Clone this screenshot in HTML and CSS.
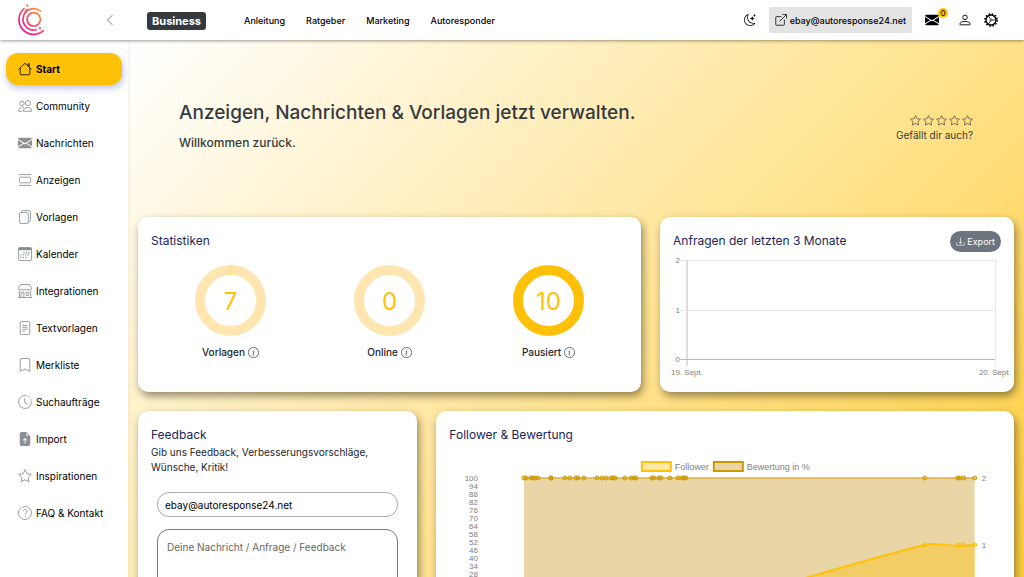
FILE: index.html
```html
<!DOCTYPE html>
<html lang="de">
<head>
<meta charset="utf-8">
<meta name="viewport" content="width=device-width, initial-scale=1">
<title>Autoresponder – Start</title>
<link rel="stylesheet" href="styles.css">
</head>
<body>
<header class="topbar">
  <div class="brand">
    <a class="logo" href="#" aria-label="Startseite">
      <svg width="28" height="32" viewBox="0 0 28 32" fill="none" stroke="url(#lg)" stroke-width="1.700" stroke-linecap="round">
        <defs><linearGradient id="lg" gradientUnits="userSpaceOnUse" x1="4" y1="26" x2="23" y2="7"><stop offset="0" stop-color="#f0149a"/><stop offset=".5" stop-color="#fa4a68"/><stop offset="1" stop-color="#fb9a34"/></linearGradient></defs>
        <circle cx="15.700" cy="15.300" r="6.700"/>
        <path d="M22.700 7.200A10.700 10.700 0 1 0 18.400 25.700"/>
        <path d="M6 4.600A14.500 14.500 0 0 0 25.400 26.700"/>
        <path d="M9.200 5.500L7.200 7.500"/>
        <circle cx="9.300" cy="1.600" r=".4"/><circle cx="21.900" cy="24.300" r=".4"/>
      </svg>
    </a>
    <button class="icon-btn collapse" aria-label="Menü einklappen"><svg width="8" height="12" viewBox="0 0 8 12" fill="none" stroke="#777" stroke-width="1"><path d="M6.500 1L1.500 6l5 5"/></svg></button>
  </div>
  <span class="plan">Business</span>
  <nav class="topnav" aria-label="Hauptnavigation">
    <a href="#">Anleitung</a><a href="#">Ratgeber</a><a href="#">Marketing</a><a href="#">Autoresponder</a>
  </nav>
  <div class="tools">
    <button class="icon-btn" aria-label="Dunkelmodus"><svg width="12" height="12" viewBox="0 0 16 16" fill="#111"><path d="M6 .278a.77.77 0 0 1 .08.858 7.200 7.200 0 0 0-.878 3.460c0 4.021 3.278 7.277 7.318 7.277q.792-.001 1.533-.16a.79.79 0 0 1 .81.316.73.73 0 0 1-.031.893A8.350 8.350 0 0 1 8.344 16C3.734 16 0 12.286 0 7.710 0 4.266 2.114 1.312 5.124.060A.75.75 0 0 1 6 .278M4.858 1.311A7.270 7.270 0 0 0 1.025 7.710c0 4.020 3.279 7.276 7.319 7.276a7.320 7.320 0 0 0 5.205-2.162q-.506.063-1.029.063c-4.610 0-8.343-3.714-8.343-8.290 0-1.167.242-2.278.681-3.286"/><path d="M10.794 3.148a.217.217 0 0 1 .412 0l.387 1.162c.173.518.579.924 1.097 1.097l1.162.387a.217.217 0 0 1 0 .412l-1.162.387a1.730 1.730 0 0 0-1.097 1.097l-.387 1.162a.217.217 0 0 1-.412 0l-.387-1.162A1.730 1.730 0 0 0 9.310 6.593l-1.162-.387a.217.217 0 0 1 0-.412l1.162-.387a1.730 1.730 0 0 0 1.097-1.097zM13.863.099a.145.145 0 0 1 .274 0l.258.774c.115.346.386.617.732.732l.774.258a.145.145 0 0 1 0 .274l-.774.258a1.160 1.160 0 0 0-.732.732l-.258.774a.145.145 0 0 1-.274 0l-.258-.774a1.160 1.160 0 0 0-.732-.732l-.774-.258a.145.145 0 0 1 0-.274l.774-.258c.346-.115.617-.386.732-.732z"/></svg></button>
    <a class="account" href="#"><svg width="12" height="12" viewBox="0 0 16 16" fill="none" stroke="#222" stroke-width="1.200"><path d="M8.500 3.500H2a1 1 0 0 0-1 1V14a1 1 0 0 0 1 1h9.500a1 1 0 0 0 1-1V7.500M10 .6h5.400V6M15.400.6L6 10"/></svg>ebay@autoresponse24.net</a>
    <a class="mail" href="#" aria-label="Nachrichten"><svg width="14" height="14" viewBox="0 0 16 16" fill="#000"><path d="M.05 3.555A2 2 0 0 1 2 2h12a2 2 0 0 1 1.950 1.555L8 8.414zM0 4.697v7.104l5.803-3.558zM6.761 8.830l-6.570 4.027A2 2 0 0 0 2 14h12a2 2 0 0 0 1.808-1.144l-6.570-4.027L8 9.586zm3.436-.586L16 11.801V4.697z"/></svg><span class="badge">0</span></a>
    <button class="icon-btn" aria-label="Profil"><svg width="12" height="12" viewBox="0 0 16 16" fill="none" stroke="#000" stroke-width="1.200"><circle cx="8" cy="4.500" r="3"/><path d="M2 14.400c-.7 0-.9-.3-.9-.9C1.200 11.600 3.200 9.900 8 9.900s6.800 1.700 6.900 3.600c0 .6-.2.900-.9.900z"/></svg></button>
    <button class="icon-btn" aria-label="Einstellungen"><svg width="14" height="14" viewBox="0 0 16 16" fill="none" stroke="#000"><circle cx="8" cy="8" r="5.700" stroke-width="1.600"/><circle cx="8" cy="8" r="7" stroke-width="1.800" stroke-dasharray="1.830 1.830"/><circle cx="8" cy="8" r="1.200" stroke-width=".8"/><path stroke-width=".8" d="M9.300 8H13M7.350 6.900L5.300 3.500M7.350 9.100L5.300 12.500"/></svg></button>
  </div>
</header>
<div class="layout">
  <aside class="sidebar">
    <nav class="menu" aria-label="Seitenmenü">
      <a class="active" href="#"><svg viewBox="0 0 16 16"><path d="M.6 8.400L8 1.400l7.400 7M2.500 7v6.900c0 .4.300.7.700.7h9.600c.4 0 .7-.3.700-.7V7M11.500 4.500V2h1.300v3.800"/></svg>Start</a>
      <a href="#"><svg viewBox="0 0 16 16"><circle cx="4.500" cy="5" r="2.500"/><circle cx="11.300" cy="4.700" r="2.900"/><path d="M7 9.800c-2.500-1.300-6.300.2-6.300 4.200h4M6.200 14c0-5.800 9.300-5.800 9.300 0z"/></svg>Community</a>
      <a href="#"><svg viewBox="0 0 16 16" class="solid"><path d="M.05 3.555A2 2 0 0 1 2 2h12a2 2 0 0 1 1.950 1.555L8 8.414zM0 4.697v7.104l5.803-3.558zM6.761 8.830l-6.570 4.027A2 2 0 0 0 2 14h12a2 2 0 0 0 1.808-1.144l-6.570-4.027L8 9.586zm3.436-.586L16 11.801V4.697z"/></svg>Nachrichten</a>
      <a href="#"><svg viewBox="0 0 16 16"><path d="M1 1.800h14M1 14.200h14"/><rect x="1.500" y="4.800" width="13" height="6.400" rx="1.500"/></svg>Anzeigen</a>
      <a href="#"><svg viewBox="0 0 16 16"><rect x="1.800" y="2.800" width="10" height="12.700" rx="1.800"/><path d="M4 2.600C4 1.200 4.700.6 5.800.6h6.500c1.200 0 2 .8 2 2v8.600c0 1.400-.8 2.200-2.300 2.200"/></svg>Vorlagen</a>
      <a href="#"><svg viewBox="0 0 16 16"><rect x=".5" y=".6" width="15" height="14.900" rx="1.500"/><path d="M.5 2.300h15" stroke-width="2.800"/><path d="M6.200 6.500h7.500M2.600 9h11M2.600 11.800h7.500" stroke-width="1.400" stroke-dasharray="1.400 1.400"/></svg>Kalender</a>
      <a href="#"><svg viewBox="0 0 16 16"><path d="M2.900.6h10.200l2.300 3.800v1.200a1.900 1.900 0 0 1-3.700 0 1.900 1.900 0 0 1-3.700 0 1.900 1.900 0 0 1-3.700 0 1.900 1.900 0 0 1-3.700 0V4.400zM1.500 8v7.400M14.500 8v7.400M0 15.500h16M3.500 15.500V9.500h3.200v6M9.300 9.500h3v3.500h-3z"/></svg>Integrationen</a>
      <a href="#"><svg viewBox="0 0 16 16"><rect x="2.500" y=".6" width="11" height="14.900" rx="1.700"/><path d="M5 5h6M5 7.200h6M5 9.400h6M5 11.600h3"/></svg>Textvorlagen</a>
      <a href="#"><svg viewBox="0 0 16 16"><path d="M2.500 15.200V2.200c0-1 .6-1.600 1.600-1.600h7.800c1 0 1.600.6 1.600 1.600v13L8 12.500z"/></svg>Merkliste</a>
      <a href="#"><svg viewBox="0 0 16 16"><path d="M8 .6a7.400 7.400 0 1 0 7.400 8.400"/><path d="M8 .6a7.400 7.400 0 0 1 7.400 8.400" stroke-dasharray="1.600 1.200"/><path d="M7.700 3.500V9l3.300 2"/></svg>Suchaufträge</a>
      <a href="#"><svg viewBox="0 0 16 16" class="solid"><path fill-rule="evenodd" d="M9.300 0H4a2 2 0 0 0-2 2v12a2 2 0 0 0 2 2h8a2 2 0 0 0 2-2V4.700zM9.500 1.500l3 3h-2a1 1 0 0 1-1-1zM6.350 9.850a.5.5 0 0 1-.7-.7l2-2a.5.5 0 0 1 .7 0l2 2a.5.5 0 0 1-.7.7L8.500 8.700V12.500a.5.5 0 0 1-1 0V8.700z"/></svg>Import</a>
      <a href="#"><svg viewBox="0 0 16 16"><path d="M8 .9l2.200 4.500 5 .7-3.600 3.500.9 5L8 12.300l-4.500 2.300.9-5L.8 6.100l5-.7z"/></svg>Inspirationen</a>
      <a href="#"><svg viewBox="0 0 16 16"><circle cx="8" cy="8" r="7.400"/><path d="M5.800 6.100c.1-3 4.600-2.900 4.600-.2 0 1.700-2.200 1.800-2.200 3.700M8.200 11v1.300"/></svg>FAQ &amp; Kontakt</a>
    </nav>
  </aside>
  <main class="content">
    <section class="hero">
      <div class="greeting">
        <h1>Anzeigen, Nachrichten &amp; Vorlagen jetzt verwalten.</h1>
        <p class="welcome">Willkommen zurück.</p>
      </div>
      <div class="rating">
        <div class="stars" role="img" aria-label="0 von 5 Sternen">
          <svg viewBox="0 0 16 16"><path id="star" d="M8 .9l2.200 4.500 5 .7-3.600 3.500.9 5L8 12.300l-4.500 2.300.9-5L.8 6.100l5-.7z"/></svg><svg viewBox="0 0 16 16"><use href="#star"/></svg><svg viewBox="0 0 16 16"><use href="#star"/></svg><svg viewBox="0 0 16 16"><use href="#star"/></svg><svg viewBox="0 0 16 16"><use href="#star"/></svg>
        </div>
        <a href="#">Gefällt dir auch?</a>
      </div>
    </section>
    <div class="cards">
      <section class="card span-7">
        <h2>Statistiken</h2>
        <div class="stats">
          <div class="stat">
            <svg class="ring" viewBox="0 0 71 71"><circle cx="35.500" cy="35.500" r="30.500"/><path d="M35.500 0v10"/><text x="35.500" y="45">7</text></svg>
            <span class="stat-label">Vorlagen <svg class="info" viewBox="0 0 16 16"><circle cx="8" cy="8" r="7.400"/><path id="i" d="M6.600 7l1.900-.3-1.200 4.700c-.1.600.3.800 1.300.2M8.700 4v1.200"/></svg></span>
          </div>
          <div class="stat">
            <svg class="ring" viewBox="0 0 71 71"><circle cx="35.500" cy="35.500" r="30.500"/><text x="35.500" y="45">0</text></svg>
            <span class="stat-label">Online <svg class="info" viewBox="0 0 16 16"><circle cx="8" cy="8" r="7.400"/><use href="#i"/></svg></span>
          </div>
          <div class="stat">
            <svg class="ring full" viewBox="0 0 71 71"><circle cx="35.500" cy="35.500" r="30.500"/><text x="35.500" y="45">10</text></svg>
            <span class="stat-label">Pausiert <svg class="info" viewBox="0 0 16 16"><circle cx="8" cy="8" r="7.400"/><use href="#i"/></svg></span>
          </div>
        </div>
      </section>
      <section class="card span-5">
        <div class="card-head">
          <h2>Anfragen der letzten 3 Monate</h2>
          <button class="export"><svg width="9" height="9" viewBox="0 0 16 16" fill="none" stroke="#fff" stroke-width="1.200"><path d="M.6 10v3.500c0 .6.500 1.100 1.100 1.100h12.600c.6 0 1.100-.5 1.100-1.100V10M8 1v10.500M4.800 8.500L8 11.700l3.200-3.200"/></svg>Export</button>
        </div>
        <svg class="chart requests" viewBox="0 0 354 130" role="img" aria-label="Anfragen">
          <g stroke="#e6e6e6" fill="none"><path d="M20 11.500H335.500V117M20 61.500H335"/><path d="M27 11V117" stroke="#ddd" stroke-width="2"/><path d="M20 110.500H335" stroke="#bbb"/></g>
          <g class="end"><text x="20" y="14">2</text><text x="20" y="64">1</text><text x="20" y="113">0</text></g>
          <g class="mid"><text x="27" y="126">19. Sept.</text><text x="335" y="126">20. Sept.</text></g>
        </svg>
      </section>
      <section class="card span-4">
        <h2>Feedback</h2>
        <p class="hint">Gib uns Feedback, Verbesserungsvorschläge, Wünsche, Kritik!</p>
        <form class="feedback">
          <input type="email" aria-label="E-Mail" value="ebay@autoresponse24.net">
          <textarea rows="6" aria-label="Nachricht" placeholder="Deine Nachricht / Anfrage / Feedback"></textarea>
        </form>
      </section>
      <section class="card span-8">
        <h2>Follower &amp; Bewertung</h2>
        <svg class="chart follower" viewBox="0 0 578 185" role="img" aria-label="Follower und Bewertung">
          <defs>
            <marker id="dr" viewBox="0 0 6 6" refX="3" refY="3" markerWidth="6" markerHeight="6" markerUnits="userSpaceOnUse"><circle cx="3" cy="3" r="2" fill="#c90" fill-opacity=".4" stroke="#c90"/></marker>
            <marker id="df" viewBox="0 0 6 6" refX="3" refY="3" markerWidth="6" markerHeight="6" markerUnits="userSpaceOnUse"><circle cx="3" cy="3" r="2" fill="#ffc107" fill-opacity=".4" stroke="#ffc107"/></marker>
          </defs>
          <rect x="206" y="7" width="29" height="9" fill="#ffe6a5" stroke="#ffc107" stroke-width="2"/>
          <rect x="278" y="7" width="29" height="9" fill="#e9d5a6" stroke="#c90" stroke-width="2"/>
          <g class="legend"><text x="239" y="15">Follower</text><text x="311" y="15">Bewertung in %</text></g>
          <path d="M88 23H539V157H88z" fill="#e9d5a6"/>
          <path d="M249 157C330 137 400 112 489 90C500 87 512 91 524 91L539 90V157z" fill="#ffc107" fill-opacity=".4"/>
          <path d="M249 157C330 137 400 112 489 90C500 87 512 91 524 91L539 90" fill="none" stroke="#ffc107" stroke-width="2"/>
          <polyline points="489,90 522,90 524,90 528,90 539,90" fill="none" marker-start="url(#df)" marker-mid="url(#df)" marker-end="url(#df)"/>
          <polyline points="88,23 90,23 95,23 97,23 99,23 102,23 115,23 115,23 129,23 134,23 140,23 142,23 148,23 161,23 166,23 170,23 175,23 177,23 179,23 189,23 195,23 198,23 200,23 216,23 218,23 223,23 225,23 234,23 242,23 246,23 248,23 250,23 489,23 522,23 524,23 528,23 539,23" fill="none" stroke="#c90" marker-start="url(#dr)" marker-mid="url(#dr)" marker-end="url(#dr)"/>
          <g class="end"><text x="42" y="26">100</text><text x="42" y="34">94</text><text x="42" y="42">88</text><text x="42" y="50">82</text><text x="42" y="58">76</text><text x="42" y="66">70</text><text x="42" y="74">64</text><text x="42" y="82">58</text><text x="42" y="90">52</text><text x="42" y="98">46</text><text x="42" y="106">40</text><text x="42" y="114">34</text><text x="42" y="122">28</text><text x="42" y="130">22</text><text x="42" y="138">16</text><text x="42" y="146">10</text><text x="42" y="154">4</text></g>
          <text x="546" y="26">2</text><text x="546" y="93">1</text><text x="546" y="160">0</text>
        </svg>
      </section>
    </div>
  </main>
</div>
</body>
</html>
```
FILE: styles.css
```css
* { box-sizing: border-box; }

body {
  margin: 0;
  height: 100vh;
  display: flex;
  flex-direction: column;
  overflow: hidden;
  font: 10px/15px Inter, "Liberation Sans", sans-serif;
  color: #212529;
  background: #fff;
}

a { color: inherit; text-decoration: none; }
h1, h2, p { margin: 0; }
svg { display: block; flex: none; }

/* Top bar */
.topbar {
  position: relative;
  z-index: 2;
  flex: none;
  height: 40px;
  display: flex;
  align-items: center;
  background: #fff;
  box-shadow: 0 1px 3px rgba(0, 0, 0, .4);
  color: #000;
}
.brand {
  width: 128px;
  padding: 0 14px 0 18px;
  display: flex;
  align-items: center;
  justify-content: space-between;
}
.icon-btn {
  padding: 0;
  border: 0;
  background: none;
  display: flex;
}
.plan {
  margin: 2px 0 0 19px;
  padding: 0 5px;
  border-radius: 3px;
  background: #343a40;
  color: #fff;
  font-size: 11px;
  line-height: 18px;
  font-weight: 700;
}
.topnav {
  margin-left: 38px;
  display: flex;
  gap: 21px;
  font-size: 9px;
  font-weight: 500;
}
.tools {
  margin-left: auto;
  padding-right: 26px;
  display: flex;
  align-items: center;
  gap: 13px;
}
.account {
  display: flex;
  align-items: center;
  gap: 3px;
  height: 26px;
  padding: 0 6px;
  border-radius: 2px;
  background: #e3e3e3;
  font-size: 9px;
  font-weight: 500;
}
.mail { position: relative; margin-right: 7px; }
.badge {
  position: absolute;
  top: -5px;
  right: -9px;
  width: 10px;
  border-radius: 5px;
  background: #ffc107;
  font-size: 8px;
  line-height: 10px;
  text-align: center;
}

/* Page frame */
.layout { flex: 1; min-height: 0; display: flex; }
.sidebar {
  position: relative;
  z-index: 1;
  flex: none;
  width: 128px;
  padding: 13px 6px;
  background: #fff;
  box-shadow: 0 0 5px rgba(0, 0, 0, .08);
}
.menu { display: flex; flex-direction: column; gap: 5px; }
.menu a {
  height: 32px;
  padding: 0 12px;
  display: flex;
  align-items: center;
  gap: 4px;
  border-radius: 12px;
  color: #000;
  white-space: nowrap;
}
.menu svg {
  width: 14px;
  height: 14px;
  fill: none;
  stroke: #8a9096;
}
.menu .solid { fill: #8a9096; stroke: none; }
.menu .active {
  background: #ffc107;
  font-weight: 700;
  box-shadow: 1px 3px 7px rgba(40, 80, 170, .35);
}
.menu .active svg { stroke: #111; }

.content {
  flex: 1;
  min-width: 0;
  overflow-y: auto;
  scrollbar-width: none;
  background: linear-gradient(135deg, #fff 0, #ffc107 1308px);
}

/* Hero */
.hero {
  height: 177px;
  padding: 0 51px;
  display: flex;
  align-items: center;
  justify-content: space-between;
  color: #343a40;
}
.greeting { padding-bottom: 4px; }
.hero h1 { font-size: 19px; line-height: 24px; font-weight: 500; }
.welcome { margin-top: 9px; font-size: 12px; line-height: 18px; font-weight: 500; }
.rating { display: flex; flex-direction: column; align-items: flex-end; }
.stars { display: flex; gap: 2px; }
.stars svg { width: 11px; height: 11px; fill: none; stroke: #444; }
.rating a { margin-top: 2px; }

/* Cards */
.cards {
  display: grid;
  grid-template-columns: repeat(12, minmax(0, 1fr));
  gap: 19px;
  padding: 0 10px 20px;
}
.span-4 { grid-column: span 4; }
.span-5 { grid-column: span 5; }
.span-7 { grid-column: span 7; }
.span-8 { grid-column: span 8; }
.card {
  padding: 14px 13px 13px;
  border-radius: 10px;
  background: #fff;
  box-shadow: 2px 4px 9px rgba(60, 50, 20, .55);
}
.card h2 {
  font-size: 12px;
  line-height: 20px;
  font-weight: 400;
  color: #1d2357;
}
.card-head { display: flex; justify-content: space-between; }
.stats { margin-top: 14px; display: grid; grid-template-columns: repeat(3, 1fr); }
.stat { display: flex; flex-direction: column; align-items: center; gap: 9px; padding-bottom: 19px; }
.ring { width: 71px; height: 71px; }
.ring circle { fill: none; stroke: #ffe6b0; stroke-width: 10; }
.ring path { stroke: #ffd877; }
.ring.full circle { stroke: #ffc107; }
.ring text { font-size: 24px; text-anchor: middle; fill: #ffc107; }
.stat-label { display: flex; align-items: center; gap: 3px; font-weight: 500; }
.info { width: 11px; height: 11px; fill: none; stroke: #333; }
.export {
  height: 21px;
  padding: 0 6px;
  display: flex;
  align-items: center;
  gap: 2px;
  border: 0;
  border-radius: 11px;
  background: #6c757d;
  color: #fff;
  font: 9px/15px Inter, sans-serif;
}

/* Charts reach the card's left and right edges */
.chart { width: calc(100% + 26px); margin: 0 -13px; overflow: visible; }
.chart text { font-family: "Liberation Sans", sans-serif; font-size: 8px; fill: #808080; }
.chart .end text { text-anchor: end; }
.chart .mid text { text-anchor: middle; }
.chart .legend text { font-size: 9px; }
.requests { margin-top: -3px; margin-bottom: -13px; }
.follower { margin-top: 10px; }

/* Feedback form */
.feedback { padding: 17px 6px 6px; display: flex; flex-direction: column; gap: 12px; }
.feedback input,
.feedback textarea {
  width: 100%;
  border: 1px solid #aaa;
  background: #fff;
  font: 10px/15px Inter, sans-serif;
  color: #000;
}
.feedback input { height: 25px; padding: 0 7px; border-radius: 12px; }
.feedback textarea { padding: 10px 9px; border-radius: 12px; border-color: #777; resize: none; }
.feedback textarea::placeholder { color: #666; opacity: 1; }
```
